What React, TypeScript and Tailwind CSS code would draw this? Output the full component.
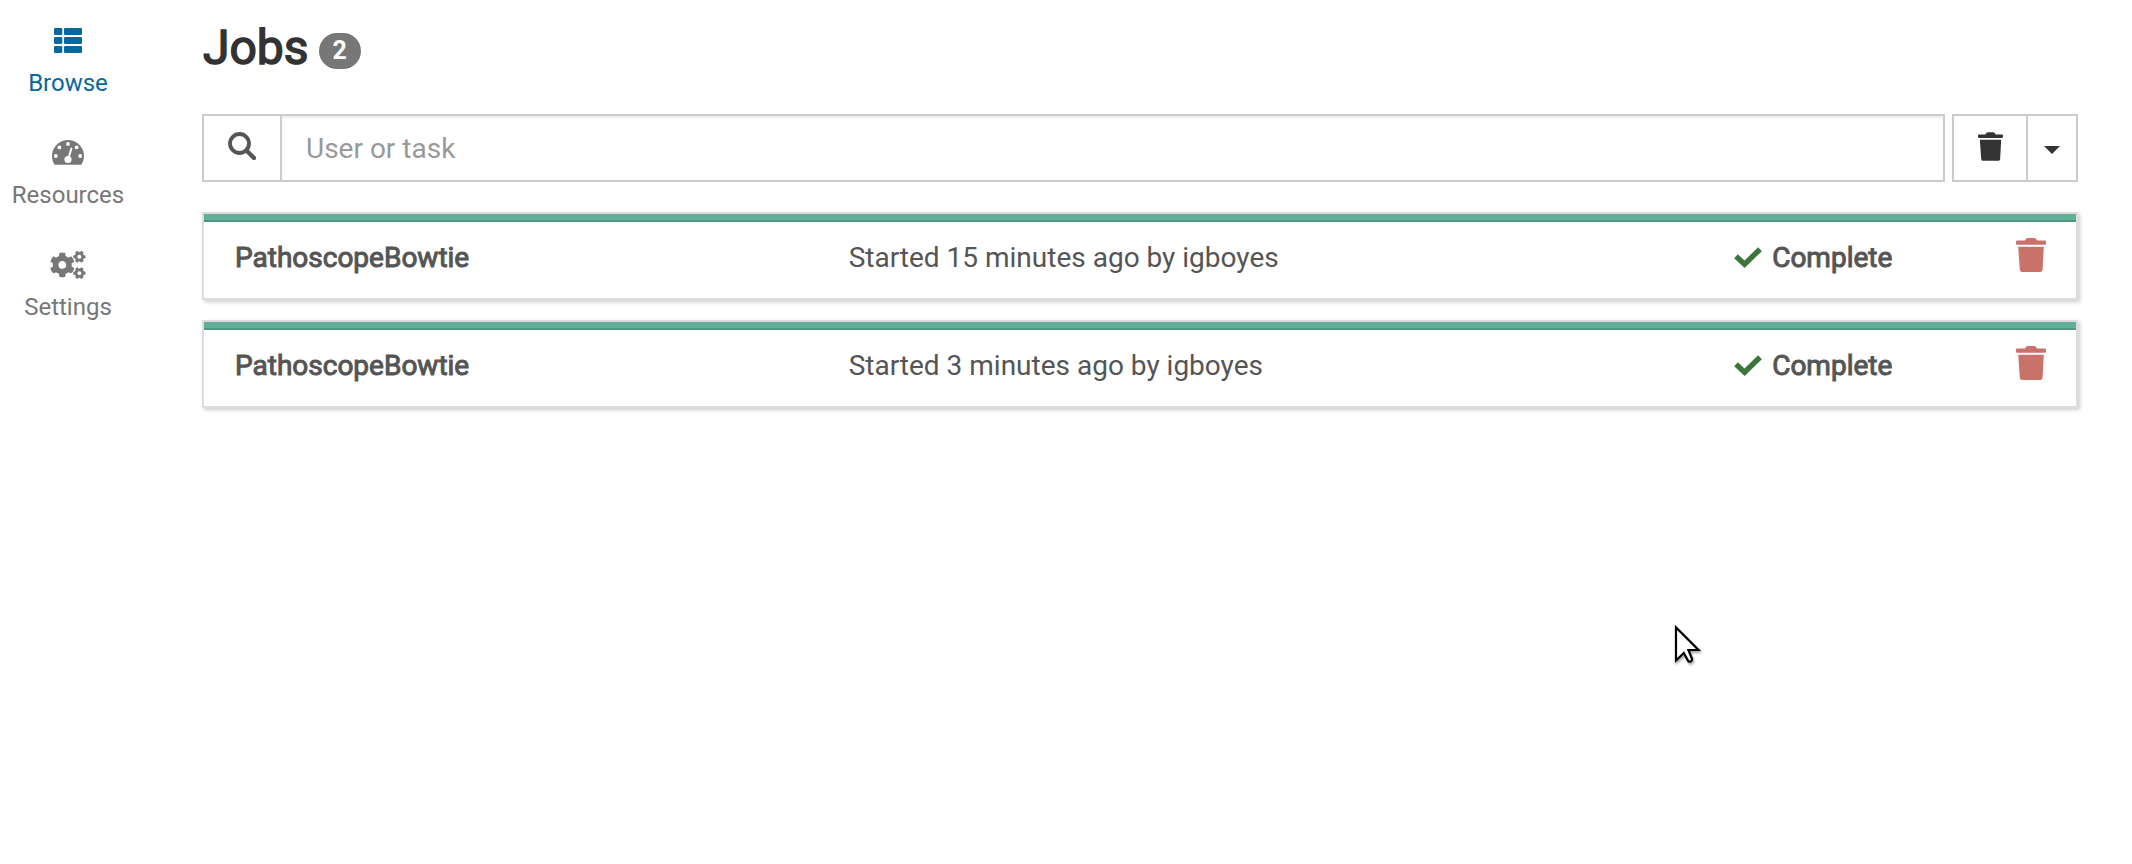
import React from "react";
import { FaCogs } from "react-icons/fa";

type IconProps = { className?: string };

function ListIcon({ className }: IconProps) {
  return (
    <svg viewBox="0 0 36 28" className={className} fill="currentColor" aria-hidden="true">
      {[1, 10, 19].map((y) => (
        <g key={y}>
          <rect x="4" y={y} width="8.3" height="7" rx="1.2" />
          <rect x="14" y={y} width="18" height="7" rx="1.2" />
        </g>
      ))}
    </svg>
  );
}

function GaugeIcon({ className }: IconProps) {
  return (
    <svg viewBox="0 0 36 28" className={className} aria-hidden="true">
      <path fill="currentColor" d="M18 1a16 16 0 0 0-16 16c0 2.800.7 5.400 2 7.700.5.900 1 1.100 1.800 1.100h24.400c.8 0 1.300-.2 1.800-1.100a16 16 0 0 0 2-7.700A16 16 0 0 0 18 1z" />
      <g fill="#fff">
        <circle cx="5.800" cy="17" r="1.900" />
        <circle cx="9.400" cy="8.400" r="1.900" />
        <circle cx="18" cy="5" r="1.900" />
        <circle cx="26.600" cy="8.400" r="1.900" />
        <circle cx="30.200" cy="17" r="1.900" />
        <circle cx="18" cy="20.500" r="3.600" />
      </g>
      <path d="M18.200 20 21.400 9.600" stroke="#fff" strokeWidth="2" strokeLinecap="round" />
    </svg>
  );
}

function SearchIcon({ className }: IconProps) {
  return (
    <svg viewBox="0 0 28 28" className={className} fill="none" stroke="currentColor" aria-hidden="true">
      <circle cx="11.500" cy="11.500" r="9.500" strokeWidth="3.800" />
      <path d="M18.500 18.500 26 26" strokeWidth="4.400" strokeLinecap="round" />
    </svg>
  );
}

function TrashIcon({ className }: IconProps) {
  return (
    <svg viewBox="0 0 30 34" className={className} fill="currentColor" aria-hidden="true">
      <path d="M1.400 2.600H9C9.600.8 10.600 0 12 0h6c1.400 0 2.400.8 3 2.600h7.600c.9 0 1.400.5 1.400 1.400v1.400c0 .9-.5 1.400-1.400 1.400H1.400C.5 6.800 0 6.300 0 5.400V4c0-.9.5-1.400 1.400-1.400z" />
      <path d="M2.200 8.800h25.600L26.600 31.600c-.1 1.600-1 2.400-2.600 2.400H6.400c-1.600 0-2.500-.8-2.600-2.400z" />
    </svg>
  );
}

function CheckIcon({ className }: IconProps) {
  return (
    <svg viewBox="0 0 28 21" className={className} fill="none" stroke="currentColor" strokeWidth="5.400" aria-hidden="true">
      <path d="M2 9.200 10.600 17.200 26 2.200" strokeLinejoin="miter" />
    </svg>
  );
}

function Pointer() {
  return (
    <svg viewBox="0 0 30 44" className="pointer-events-none absolute left-[1674px] top-[624px] h-11 w-[30px] drop-shadow-[1px_2px_1px_rgba(0,0,0,0.35)]" aria-hidden="true">
      <path d="M2 3.500V36.500L9.800 29l4.200 7.600c1.100 1.800 4.600.8 4-1.800L14.400 26H24.500z" fill="#fff" stroke="#000" strokeWidth="2.200" />
    </svg>
  );
}

const navItems = [
  { label: "Browse", Icon: ListIcon, active: true },
  { label: "Resources", Icon: GaugeIcon, active: false },
  { label: "Settings", Icon: FaCogs, active: false },
];

const jobs = [
  { id: 1, task: "PathoscopeBowtie", started: "Started 15 minutes ago by igboyes", state: "Complete" },
  { id: 2, task: "PathoscopeBowtie", started: "Started 3 minutes ago by igboyes", state: "Complete" },
];

export default function App() {
  return (
    <div className="relative flex min-h-screen bg-white font-[Roboto,sans-serif] text-[28px] leading-10 text-[#333]">
      <nav aria-label="Jobs sections" className="flex w-[136px] shrink-0 flex-col gap-10 pt-[27px]">
        {navItems.map(({ label, Icon, active }) => (
          <a
            key={label}
            href={`#${label.toLowerCase()}`}
            aria-current={active ? "page" : undefined}
            className={`flex flex-col items-center gap-3 text-2xl leading-8 ${active ? "text-[#07689d]" : "text-[#777]"}`}
          >
            <Icon className="h-7 w-9" />
            {label}
          </a>
        ))}
      </nav>

      <main className="min-w-0 flex-1 pl-[66px] pr-[54px] pt-5">
        <h1 className="mb-[38px] flex items-center gap-[10px] pl-px text-5xl leading-[56px] [-webkit-text-stroke:1.5px]">
          Jobs
          <span className="mt-1.5 flex h-9 w-[42px] items-center justify-center rounded-full bg-[#777] text-[25px] font-bold text-white [-webkit-text-stroke:0]">
            2
          </span>
        </h1>

        <div className="mb-[30px] flex h-[68px] gap-[7px]">
          <div className="flex min-w-0 flex-1 border-2 border-[#ccc]">
            <label htmlFor="job-search" className="flex w-[78px] shrink-0 items-center justify-center border-r-2 border-[#ccc] pb-1 text-[#555]">
              <SearchIcon className="size-7" />
            </label>
            <input
              id="job-search"
              type="text"
              aria-label="Search jobs"
              placeholder="User or task"
              className="min-w-0 flex-1 px-6 pt-0.5 text-[#555] shadow-[inset_0_2px_2px_rgba(0,0,0,0.075)] outline-none placeholder:text-[#999]"
            />
          </div>
          <div className="flex border-2 border-[#ccc]">
            <button type="button" aria-label="Clear jobs" className="flex w-[74px] items-center justify-center border-r-2 border-[#ccc] pb-1">
              <TrashIcon className="h-[29px] w-[25px]" />
            </button>
            <button type="button" aria-label="More clear options" className="flex w-12 items-center justify-center pt-1">
              <svg viewBox="0 0 16 8" className="h-2 w-4" fill="currentColor" aria-hidden="true">
                <path d="M0 0h16L8 8z" />
              </svg>
            </button>
          </div>
        </div>

        <ul className="flex flex-col gap-5">
          {jobs.map((job) => (
            <li key={job.id} className="border-2 border-[#ddd] text-[#555] shadow-[2px_2px_4px_rgba(0,0,0,0.2)]">
              <div className="h-2 border-b-2 border-[#529680] bg-[#60af98]" />
              <div className="grid grid-cols-[614fr_884fr_314fr] items-center pb-5 pl-[31px] pr-[30px] pt-4">
                <strong className="font-normal [-webkit-text-stroke:1px]">{job.task}</strong>
                <span>{job.started}</span>
                <div className="flex items-center justify-between">
                  <span className="flex items-center gap-[10px] pl-0.5 [-webkit-text-stroke:1px]">
                    <CheckIcon className="-mt-0.5 h-[21px] w-7 text-[#3c763d]" />
                    {job.state}
                  </span>
                  <button type="button" aria-label={`Remove ${job.task} job`} className="flex h-10 items-start text-[#c9726a]">
                    <TrashIcon className="h-[34px] w-[30px]" />
                  </button>
                </div>
              </div>
            </li>
          ))}
        </ul>
      </main>

      <Pointer />
    </div>
  );
}
